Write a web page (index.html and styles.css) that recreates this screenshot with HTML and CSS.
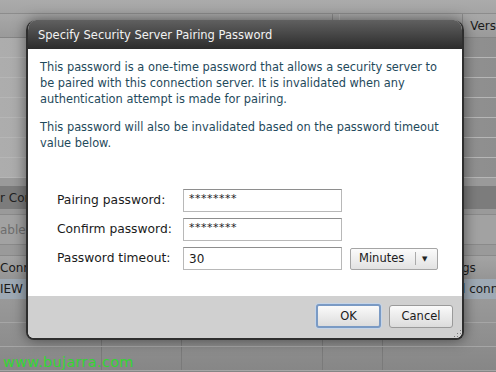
FILE: index.html
```html
<!DOCTYPE html>
<html lang="en">
<head>
    <meta charset="UTF-8">
    <title>Specify Security Server Pairing Password</title>
    <link rel="stylesheet" href="styles.css">
</head>
<body>
    <!-- Dimmed admin console behind the modal -->
    <div class="console">
        <div class="top-band"></div>
        <div class="col-header">
            <span class="col col-wide"></span>
            <span class="col col-mid"></span>
            <span class="col col-last">Vers</span>
        </div>
        <div class="list-rows">
            <div class="list-row"></div>
            <div class="list-row"></div>
            <div class="list-row"></div>
            <div class="list-row"></div>
            <div class="list-row"></div>
            <div class="list-row"></div>
            <div class="list-row"></div>
        </div>
        <div class="section-bar"><span>r Con</span></div>
        <div class="toolbar"><span class="disabled">able</span></div>
        <div class="grid-header">
            <span>Conn</span>
            <span>gs</span>
        </div>
        <div class="grid-row selected">
            <span>IEW</span>
            <span>l conn</span>
        </div>
        <div class="grid-empty">
            <div class="empty-row"></div>
            <div class="empty-row"></div>
            <div class="empty-row"></div>
        </div>
        <div class="watermark">www.bujarra.com</div>
    </div>

    <div class="dialog">
        <div class="dialog-title">Specify Security Server Pairing Password</div>
        <div class="dialog-body">
            <p>This password is a one-time password that allows a security server to be paired with this connection server. It is invalidated when any authentication attempt is made for pairing.</p>
            <p>This password will also be invalidated based on the password timeout value below.</p>

            <div class="form-grid">
                <label>Pairing password:</label>
                <div class="field">********</div>
                <div></div>

                <label>Confirm password:</label>
                <div class="field">********</div>
                <div></div>

                <label>Password timeout:</label>
                <div class="field plain">30</div>
                <div class="unit-select">
                    <span class="unit-text">Minutes</span>
                    <span class="unit-arrow">&#9660;</span>
                </div>
            </div>
        </div>
        <div class="dialog-footer">
            <button class="btn btn-default">OK</button>
            <button class="btn">Cancel</button>
            <span class="grip"></span>
        </div>
    </div>
</body>
</html>
```

FILE: styles.css
```css
:root {
    --text-teal: #1f4a5c;
    --bg-grey: #9a9a9a;
    --footer-grey: #d0d0d0;
}

* {
    box-sizing: border-box;
}

body {
    margin: 0;
    width: 496px;
    height: 372px;
    overflow: hidden;
    font-family: "DejaVu Sans", Verdana, sans-serif;
    background: var(--bg-grey);
    position: relative;
}

/* Background console */
.console {
    display: flex;
    flex-direction: column;
    height: 372px;
    font-size: 12px;
    color: #1a1a1a;
}

.top-band {
    flex: none;
    height: 14px;
    background: linear-gradient(#ababab, #a4a4a4);
    border-bottom: 1px solid #8c8c8c;
}

.col-header {
    flex: none;
    display: flex;
    height: 24px;
    background: linear-gradient(#a8a8a8, #9a9a9a);
    border-bottom: 1px solid #858585;
}

.col {
    display: flex;
    align-items: center;
    border-right: 1px solid #8a8a8a;
}

.col-wide { width: 336px; }
.col-mid { width: 125px; border-left: 1px solid #b5b5b5; margin-left: 6px; }
.col-last { flex: 1; padding-left: 7px; border-right: none; }

.list-rows {
    flex: none;
    display: flex;
    flex-direction: column;
}

.list-row {
    height: 20px;
    background: linear-gradient(90deg, #adadad, #9c9c9c 60%, #8e8e8e);
    border-bottom: 1px solid #b6b6b6;
}

.section-bar {
    flex: none;
    height: 23px;
    margin-top: 8px;
    background: #7c7c7c;
    display: flex;
    align-items: center;
    color: #222;
}

.toolbar {
    flex: none;
    height: 31px;
    margin-top: 5px;
    border-top: 1px solid #8a8a8a;
    border-bottom: 1px solid #8a8a8a;
    display: flex;
    align-items: center;
    background: #a2a2a2;
}

.disabled {
    color: #6e6e6e;
}

.grid-header,
.grid-row {
    flex: none;
    display: flex;
    justify-content: space-between;
    align-items: center;
}

.grid-header {
    height: 24px;
    margin-top: 10px;
    background: linear-gradient(#a4a4a4, #959595);
    border-top: 1px solid #8a8a8a;
}

.grid-header span:last-child,
.grid-row span:last-child {
    width: 34px;
    white-space: nowrap;
}

.grid-row {
    height: 20px;
}

.grid-row.selected {
    background: #9ea9b4;
}

.grid-empty {
    flex: 1;
    display: flex;
    flex-direction: column;
    background: linear-gradient(#999, #868686);
}

.empty-row {
    height: 24px;
    border-bottom: 1px solid #a6a6a6;
    background-image:
        linear-gradient(#7a7a7a, #7a7a7a),
        linear-gradient(#7a7a7a, #7a7a7a),
        linear-gradient(#7a7a7a, #7a7a7a),
        linear-gradient(#7a7a7a, #7a7a7a);
    background-size: 1px 100%;
    background-repeat: no-repeat;
    background-position: 101px 0, 181px 0, 322px 0, 382px 0;
}

.watermark {
    position: absolute;
    left: 3px;
    top: 354px;
    font-size: 14.5px;
    line-height: 16px;
    color: #33d633;
    letter-spacing: 0.3px;
}

/* Modal dialog */
.dialog {
    position: absolute;
    left: 26px;
    top: 20px;
    width: 438px;
    height: 320px;
    display: flex;
    flex-direction: column;
    border: 2px solid #2e2e2e;
    border-top: none;
    border-radius: 10px 10px 8px 8px;
    overflow: hidden;
    background: #fff;
    box-shadow: 0 0 14px rgba(0, 0, 0, 0.5);
}

.dialog-title {
    flex: none;
    height: 29px;
    margin: 0 -2px;
    padding-left: 12px;
    display: flex;
    align-items: center;
    background: linear-gradient(#606060, #2c2c2c);
    color: #f2f2f2;
    font-size: 11.5px;
}

.dialog-body {
    flex: 1;
    padding: 10px 12px 0 12px;
    color: var(--text-teal);
    font-size: 11.4px;
    line-height: 16px;
}

.dialog-body p {
    margin: 0 0 12px 0;
}

.form-grid {
    display: grid;
    grid-template-columns: 126px 159px auto;
    grid-auto-rows: 23px;
    row-gap: 6px;
    margin: 38px 0 0 17px;
    align-items: center;
    color: #1b1b1b;
}

.form-grid label {
    font-size: 12.3px;
    align-self: start;
    padding-top: 3px;
}

.field {
    height: 23px;
    border: 1px solid #b8b8b8;
    border-top-color: #8e8e8e;
    background: #fff;
    padding: 2px 5px 0 5px;
    font-size: 11px;
    line-height: 14px;
    letter-spacing: 0.5px;
}

.field.plain {
    padding-top: 4px;
    letter-spacing: 0;
    font-size: 12px;
}

.unit-select {
    width: 88px;
    height: 22px;
    margin-left: 8px;
    display: flex;
    align-items: center;
    border: 1px solid #a5a5a5;
    border-radius: 2px;
    background: linear-gradient(#fbfbfb, #e2e2e2);
    font-size: 11.5px;
}

.unit-text {
    padding-left: 8px;
    width: 65px;
    border-right: 1px solid #aaa;
    line-height: 13px;
}

.unit-arrow {
    font-size: 7px;
    padding-left: 6px;
    color: #222;
}

.dialog-footer {
    flex: none;
    height: 42px;
    display: flex;
    justify-content: flex-end;
    align-items: center;
    gap: 8px;
    padding-right: 9px;
    padding-bottom: 2px;
    background: var(--footer-grey);
    position: relative;
}

.btn {
    height: 23px;
    width: 64px;
    font-family: "DejaVu Sans", Verdana, sans-serif;
    font-size: 11.5px;
    color: #1a1a1a;
    border: 1px solid #9a9a9a;
    border-radius: 3px;
    background: linear-gradient(#fafafa, #dcdcdc);
    padding: 0;
}

.btn-default {
    width: 65px;
    height: 24px;
    border: 2px solid #7a9ac4;
    box-shadow: 0 0 0 1px #c4d4e8;
}

.grip {
    position: absolute;
    right: 1px;
    bottom: 1px;
    width: 8px;
    height: 8px;
    background: radial-gradient(circle, #7a7a7a 0.8px, transparent 1px) 0 0 / 3px 3px;
    clip-path: polygon(100% 0, 100% 100%, 0 100%);
}
```
